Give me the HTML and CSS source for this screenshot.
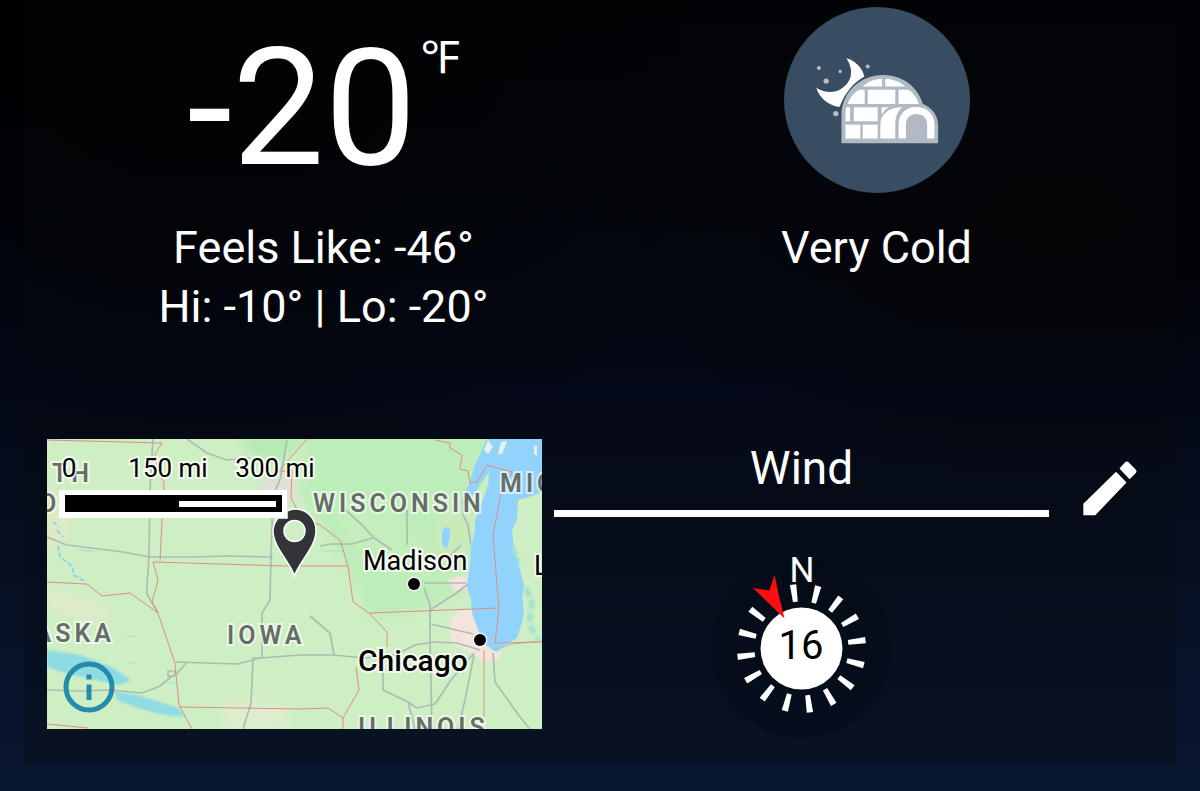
FILE: index.html
```html
<!DOCTYPE html>
<html lang="en">
<head>
<meta charset="utf-8">
<meta name="viewport" content="width=device-width, initial-scale=1">
<title>Weather</title>
<link rel="stylesheet" href="styles.css">
</head>
<body>
<main class="page">
  <section class="card current" aria-label="Current conditions">
    <div class="temperature"><span class="degrees">-20</span><span class="unit">℉</span></div>
    <svg class="condition-icon" viewBox="40 19 560 560" role="img" aria-label="Igloo at night">
      <circle cx="320" cy="299" r="280" fill="#384d62"/>
      <path d="M228 173C254 180 276 202 282 228C250 246 225 275 207 320C174 315 147 294 137 262C168 281 202 279 223 257C247 234 248 204 228 173Z" fill="#fff"/>
      <g fill="#b9bdc0"><circle cx="145" cy="203" r="6"/><circle cx="209" cy="213" r="5"/><circle cx="167" cy="242" r="8"/><circle cx="292" cy="198" r="6"/><circle cx="196" cy="340" r="8"/></g>
      <path d="M213 429V346C213 276 269 224 339 224C397 224 443 260 458 311C486 321 504 346 504 377V429Z" fill="#b1b9c2"/>
      <g fill="#fff">
        <path d="M277 258C293 243 312 236 335 235V258Z"/>
        <path d="M345 235C369 237 389 244 405 258H345Z"/>
        <path d="M267 268H283V311H232C237 293 249 278 267 268Z"/>
        <path d="M292 268H375V311H292Z"/>
        <path d="M385 268H415C431 280 441 294 446 311H385Z"/>
        <path d="M227 321H239V363H225V340Z"/>
        <path d="M250 321H322V363H250Z"/>
        <path d="M225 373H270V415H225Z"/>
        <path d="M277 373H322V415H277Z"/>
        <path d="M334 321H355C344 328 337 337 334 344Z"/>
        <path d="M330 415V374C330 342 356 320 397 321C382 331 375 349 375 374V415Z"/>
        <path d="M385 415V374C385 342 406 320 438 320C471 320 493 342 493 374V415H471V374C471 354 459 341 439 341C419 341 407 354 407 374V415Z"/>
      </g>
    </svg>
    <p class="summary">Feels Like: -46°<br>Hi: -10° | Lo: -20°</p>
    <p class="summary">Very Cold</p>
  </section>

  <section class="card details" aria-label="Location and wind">
    <div class="map">
      <svg class="map-canvas" viewBox="47 439 495 290" role="img" aria-label="Map of Iowa and nearby states">
        <defs>
          <filter id="soft" x="-20%" y="-20%" width="140%" height="140%"><feGaussianBlur stdDeviation="5"/></filter>
          <filter id="edge"><feGaussianBlur stdDeviation="1"/></filter>
        </defs>
        <rect x="47" y="439" width="495" height="290" fill="#ceeec3"/>
        <g filter="url(#soft)">
          <path d="M307 430H500L475 500L470 590L400 615H368L350 570L320 525L300 490Z" fill="#bdedb9"/>
          <path d="M240 435H310L280 462L250 455Z" fill="#b7eab4"/>
          <path d="M47 490L70 500V530L47 560Z" fill="#e0eac5"/>
          <path d="M47 590L90 598L120 612L85 620L47 610Z" fill="#dfeccb"/>
          <path d="M330 500L380 500L440 560L425 580L355 555Z" fill="#c4eebb"/>
          <path d="M225 700L290 705L285 729H225Z" fill="#e0edcf"/>
          <path d="M440 500L470 500L468 570L430 565Z" fill="#c9ebb9"/>
          <path d="M262 475H295V500H262Z" fill="#e1dfd7"/>
        </g>
        <g fill="#8edce2" filter="url(#edge)">
          <path d="M47 650L80 655L112 667L131 680L120 685L90 679L62 672L47 667Z"/>
          <path d="M115 692L138 695L178 708L185 717L165 715L140 709L117 700Z"/>
        </g>
        <g fill="#f5e4de" filter="url(#edge)">
          <path d="M450 619L460 610L472 610L480 634L490 650L502 652L497 661L484 662L470 652L451 643Z"/>
          <path d="M448 580L466 574L468 588L454 592Z"/>
        </g>
        <path d="M487 439H542V492L532 496L518 500L517 520L512 530L514 547L520 570L524 585L522 597L524 612L521 626L517 638L503 647L497 652L487 646L480 635L477 627L472 613L471 600L467 587L470 563L471 547L475 530L475 520L482 502L488 485L489 472L481 483L475 493L464 505L461 501L470 482L475 465Z" fill="#91d3fd"/>
        <path d="M442 532C446 523 451 527 450 536L447 549L442 545Z" fill="#91d3fd"/>
        <path d="M488 440L493 447L488 454L484 450ZM501 442L507 441L502 454L498 454ZM534 446H537V456L534 454Z" fill="#e8f1e9"/>
        <path d="M53 522L59 527M57 530L63 537M58 546L60 557L72 566L74 575L84 581" fill="none" stroke="#8bd5ec" stroke-width="2" stroke-dasharray="5 2"/>
        <path d="M526 588L532 603L529 624L538 640M512 547L519 562" fill="none" stroke="#9ce3d2" stroke-width="5" stroke-dasharray="9 4" filter="url(#edge)"/>
        <path d="M126 637L136 636M128 663L137 662M167 683H177M78 550L95 551M323 551H343" fill="none" stroke="#a9dfd9" stroke-width="1"/>
        <g fill="none" stroke="#adbdb2" stroke-width="1.7" stroke-linejoin="round">
          <path d="M153 439L150 490L149 557L147 585V594L158 613"/>
          <path d="M47 537L67 545L123 552L150 557L190 557L227 556L273 557"/>
          <path d="M187 439L207 453L227 460L250 458M340 505L350 514L362 525L374 538L392 550"/>
          <path d="M287 440L280 480L273 495L271 557L270 600L262 613V658H253L251 703L243 729"/>
          <path d="M176 662L237 664L260 658L300 655L333 655L365 658L395 655L415 645L433 642L457 643L480 650"/>
          <path d="M47 690L80 691L110 690L142 693L160 686L172 676M186 663L177 674M168 671H175V676H168Z"/>
          <path d="M320 546L330 544L352 544L373 538M407 510V545M424 588L430 605V640L432 729"/>
          <path d="M310 616L330 633L334 655M383 655V690L408 702L417 708L435 704L451 680L474 653M408 702L415 729"/>
          <path d="M431 624L473 634M430 610L455 594L468 584M463 515L468 525L471 545M461 545L450 556M424 583H466M474 655L465 700L458 729M493 653L495 682L520 717L530 729M463 500V515"/>
          <path d="M493 650L512 644L542 641" stroke-width="1"/>
        </g>
        <g fill="none" stroke="#df8d85" stroke-width="1" stroke-linejoin="round">
          <path d="M47 440L162 443L155 454L159 475L164 482L160 561M153 562L286 566L348 566"/>
          <path d="M153 562L158 580L152 602L158 613L175 663L179 705L192 729M47 582L87 584L102 596L130 593L158 613M47 724L88 728"/>
          <path d="M179 707L300 709L328 708L343 718V729M343 718L359 690L356 667M387 647V632L369 613L353 602L348 566L340 540L320 525L300 515L291 498L292 470L278 472L307 439"/>
          <path d="M370 613L498 608M435 440L450 443V448L462 455L460 469L468 471L470 483L477 482L487 465L512 472L501 493L493 535L497 585L499 608L495 643L542 642M484 650V717"/>
        </g>
        <g class="state-label">
          <text x="52" y="482">TH</text>
          <text x="39" y="512">O</text>
          <text x="313" y="512">WISCONSIN</text>
          <text x="500" y="492">MICHIGAN</text>
          <text x="227" y="644">IOWA</text>
          <text x="115" y="642" text-anchor="end">NEBRASKA</text>
          <text x="358" y="736">ILLINOIS</text>
        </g>
        <g stroke="#fff" stroke-opacity=".7" stroke-width="3" paint-order="stroke" fill="#000">
          <circle cx="414" cy="584" r="6"/><circle cx="480" cy="640" r="6"/>
        </g>
        <g class="city-label">
          <text x="363" y="570">Madison</text>
          <text x="534" y="575">Lansing</text>
          <text class="city-major" x="358" y="671">Chicago</text>
        </g>
        <g class="scale">
          <rect x="59" y="490" width="228" height="28" fill="#fff"/>
          <rect x="65" y="495" width="217" height="17" fill="#000"/>
          <rect x="179" y="501" width="97" height="6" fill="#fff"/>
          <text x="69" y="477" text-anchor="middle">0</text>
          <text x="168" y="477" text-anchor="middle">150 mi</text>
          <text x="275" y="477" text-anchor="middle">300 mi</text>
        </g>
        <path fill-rule="evenodd" d="M294.500 576C290 562 273 547 273 531C273 526 275 522 278 518H287V511Q291 509 294.500 509C307 509 316 518 316 531C316 547 299 562 294.500 576ZM294.500 520.500A10.500 10.500 0 1 0 294.500 541.500A10.500 10.500 0 1 0 294.500 520.500Z" fill="#333437" stroke="#fff" stroke-width="1.500"/>
      </svg>
      <button class="info" type="button" aria-label="Map information">
        <svg viewBox="0 0 52 52" aria-hidden="true"><circle cx="26" cy="26" r="23" fill="none" stroke="#258bad" stroke-width="5"/><path d="M23.500 13.500H28.500V18.500H23.500ZM23.500 23.500H28.500V39H23.500Z" fill="#258bad"/></svg>
      </button>
    </div>

    <div class="wind">
      <h2 class="wind-title">Wind</h2>
      <svg class="compass" viewBox="709 548 181 191" role="img" aria-label="Wind 16 from the north-northwest">
        <circle cx="799.500" cy="648" r="90" fill="#030914" fill-opacity=".4"/>
        <g transform="translate(799.500 648.500)">
          <g fill="#fff">
            <path id="tick" d="M-3.200 -64.500H3.200L2.400 -47H-2.400Z" transform="rotate(-7.500)"/>
            <use href="#tick" transform="rotate(22.500)"/><use href="#tick" transform="rotate(45)"/><use href="#tick" transform="rotate(67.500)"/>
            <use href="#tick" transform="rotate(90)"/><use href="#tick" transform="rotate(112.500)"/><use href="#tick" transform="rotate(135)"/>
            <use href="#tick" transform="rotate(157.500)"/><use href="#tick" transform="rotate(180)"/><use href="#tick" transform="rotate(202.500)"/>
            <use href="#tick" transform="rotate(225)"/><use href="#tick" transform="rotate(247.500)"/><use href="#tick" transform="rotate(270)"/>
            <use href="#tick" transform="rotate(292.500)"/><use href="#tick" transform="rotate(315)"/>
          </g>
          <circle r="41" fill="#fff"/>
        </g>
        <path d="M782.500 618.500L751 588L767.500 590.500L772.500 575L777 596Z" fill="#fb0d12"/>
        <text class="compass-north" x="800" y="582" text-anchor="middle">N</text>
        <text class="compass-speed" x="799" y="659" text-anchor="middle">16</text>
      </svg>
    </div>

    <button class="edit" type="button" aria-label="Edit">
      <svg viewBox="72 61 160 162" aria-hidden="true"><path d="M73 188L170 93L201 125L108 222H73ZM180 83L197 65Q202 60 207 65L228 86Q233 91 228 97L210 115Z" fill="#fff"/></svg>
    </button>
  </section>
</main>
</body>
</html>
```
FILE: styles.css
```css
* {
  box-sizing: border-box;
}

body {
  margin: 0;
  min-height: 100vh;
  background:
    radial-gradient(ellipse at 18% 0%, #000 0%, transparent 45%),
    radial-gradient(ellipse at 88% 28%, #020204 0%, transparent 32%),
    linear-gradient(#010106 0%, #030819 45%, #050c1c 60%, #0a1731 100%);
  color: #fff;
  font-family: Roboto, "Noto Sans", sans-serif;
}

.page {
  display: flex;
  flex-direction: column;
  gap: 29px;
  padding: 0 24px 26px;
}

.card {
  background: rgba(6, 9, 12, 0.28);
}

.current {
  display: grid;
  grid-template-columns: 1fr 1fr;
  row-gap: 25px;
  padding: 7px 23px 43px;
  justify-items: center;
}

.temperature {
  display: flex;
  align-items: flex-start;
  padding-top: 19px;
  gap: 4px;
}

.degrees {
  font-size: 164px;
  line-height: 164px;
}

.unit {
  font-size: 45px;
  line-height: 64px;
}

.condition-icon {
  display: block;
  width: 186px;
}

.summary {
  margin: 0;
  font-size: 45px;
  line-height: 59px;
  text-align: center;
}

.details {
  display: grid;
  grid-template-columns: 495fr 495fr 92fr;
  column-gap: 12px;
  align-items: start;
  padding: 31px 23px 25px;
}

.map {
  position: relative;
}

.map-canvas {
  display: block;
  width: 100%;
}

.state-label {
  fill: #666d66;
  stroke: rgba(255, 255, 255, 0.65);
  stroke-width: 4px;
  paint-order: stroke;
  font-size: 25px;
  font-weight: 600;
  letter-spacing: 4px;
}

.city-label,
.scale text {
  fill: #000;
  stroke: rgba(255, 255, 255, 0.8);
  stroke-width: 4px;
  paint-order: stroke;
  font-size: 27px;
}

.scale text {
  font-size: 26px;
}

.city-label .city-major {
  font-size: 30px;
  font-weight: 500;
}

.info,
.edit {
  border: 0;
  padding: 0;
  background: none;
  cursor: pointer;
}

.info svg,
.edit svg {
  display: block;
  width: 100%;
}

.info {
  position: absolute;
  left: 16px;
  bottom: 16px;
  width: 52px;
}

.wind {
  display: flex;
  flex-direction: column;
  align-items: center;
  gap: 31px;
}

.wind-title {
  width: 100%;
  margin: 0;
  padding-bottom: 13px;
  border-bottom: 7px solid #fff;
  font-size: 46px;
  font-weight: 400;
  line-height: 58px;
  text-align: center;
}

.compass {
  display: block;
  width: 181px;
}

.compass-north {
  fill: #fff;
  font-size: 35px;
}

.compass-speed {
  fill: #000;
  font-size: 40px;
}

.edit {
  width: 54px;
  margin: 22px 16px 0 0;
  justify-self: end;
}
```
